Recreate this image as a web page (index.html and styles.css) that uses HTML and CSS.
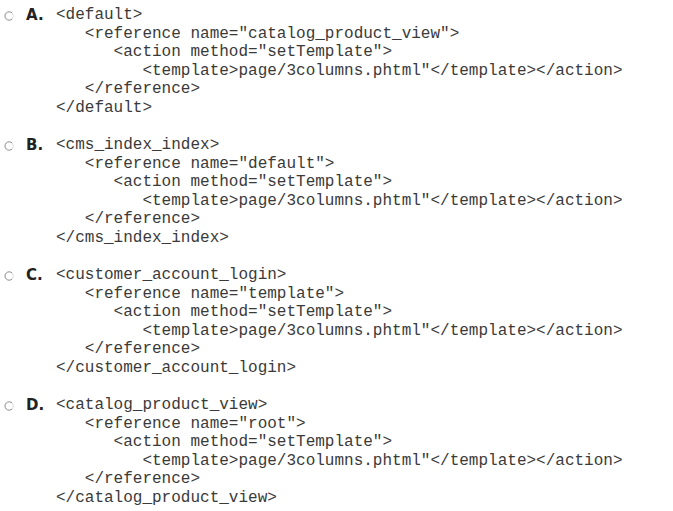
FILE: index.html
```html
<!DOCTYPE html>
<html>
<head>
<meta charset="utf-8">
<link rel="stylesheet" href="styles.css">
</head>
<body>
<div class="page">
  <div class="option">
    <span class="radio"><svg width="10" height="10" viewBox="0 0 10 10"><path d="M8.3 2.2 A4.2 4.2 0 1 0 8.3 7.8" fill="none" stroke="#8a8a8a" stroke-width="1"/><path d="M8.3 2.2 A4.2 4.2 0 0 1 8.3 7.8" fill="none" stroke="#dcdcdc" stroke-width="1"/></svg></span>
    <span class="label">A.</span>
<pre class="code">&lt;default&gt;
   &lt;reference name="catalog_product_view"&gt;
      &lt;action method="setTemplate"&gt;
         &lt;template&gt;page/3columns.phtml"&lt;/template&gt;&lt;/action&gt;
   &lt;/reference&gt;
&lt;/default&gt;</pre>
  </div>
  <div class="option">
    <span class="radio"><svg width="10" height="10" viewBox="0 0 10 10"><path d="M8.3 2.2 A4.2 4.2 0 1 0 8.3 7.8" fill="none" stroke="#8a8a8a" stroke-width="1"/><path d="M8.3 2.2 A4.2 4.2 0 0 1 8.3 7.8" fill="none" stroke="#dcdcdc" stroke-width="1"/></svg></span>
    <span class="label">B.</span>
<pre class="code">&lt;cms_index_index&gt;
   &lt;reference name="default"&gt;
      &lt;action method="setTemplate"&gt;
         &lt;template&gt;page/3columns.phtml"&lt;/template&gt;&lt;/action&gt;
   &lt;/reference&gt;
&lt;/cms_index_index&gt;</pre>
  </div>
  <div class="option">
    <span class="radio"><svg width="10" height="10" viewBox="0 0 10 10"><path d="M8.3 2.2 A4.2 4.2 0 1 0 8.3 7.8" fill="none" stroke="#8a8a8a" stroke-width="1"/><path d="M8.3 2.2 A4.2 4.2 0 0 1 8.3 7.8" fill="none" stroke="#dcdcdc" stroke-width="1"/></svg></span>
    <span class="label">C.</span>
<pre class="code">&lt;customer_account_login&gt;
   &lt;reference name="template"&gt;
      &lt;action method="setTemplate"&gt;
         &lt;template&gt;page/3columns.phtml"&lt;/template&gt;&lt;/action&gt;
   &lt;/reference&gt;
&lt;/customer_account_login&gt;</pre>
  </div>
  <div class="option">
    <span class="radio"><svg width="10" height="10" viewBox="0 0 10 10"><path d="M8.3 2.2 A4.2 4.2 0 1 0 8.3 7.8" fill="none" stroke="#8a8a8a" stroke-width="1"/><path d="M8.3 2.2 A4.2 4.2 0 0 1 8.3 7.8" fill="none" stroke="#dcdcdc" stroke-width="1"/></svg></span>
    <span class="label">D.</span>
<pre class="code">&lt;catalog_product_view&gt;
   &lt;reference name="root"&gt;
      &lt;action method="setTemplate"&gt;
         &lt;template&gt;page/3columns.phtml"&lt;/template&gt;&lt;/action&gt;
   &lt;/reference&gt;
&lt;/catalog_product_view&gt;</pre>
  </div>
</div>
</body>
</html>
```

FILE: styles.css
```css
html, body {
  margin: 0;
  padding: 0;
  background: #ffffff;
}
.page {
  padding-top: 6px;
  display: flex;
  flex-direction: column;
}
.option {
  display: flex;
  align-items: flex-start;
  height: 130px;
}
.radio {
  display: flex;
  width: 26px;
  padding-left: 4px;
  padding-top: 5px;
  box-sizing: border-box;
  height: 18px;
}
.label {
  width: 30px;
  font-family: "DejaVu Sans", sans-serif;
  font-weight: bold;
  font-size: 15px;
  line-height: 18.57px;
  color: #222;
}
.code {
  margin: 0;
  font-family: "Liberation Mono", monospace;
  font-size: 16px;
  line-height: 18.57px;
  color: #3a3a3a;
}
```
